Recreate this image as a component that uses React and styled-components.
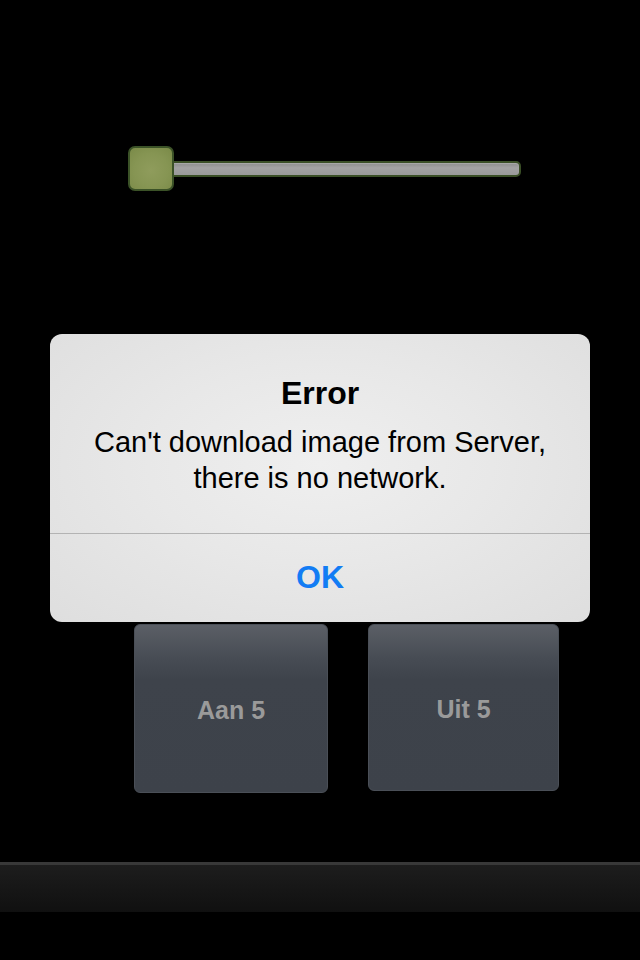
import React from 'react';
import styled, { createGlobalStyle } from 'styled-components';

const GlobalStyle = createGlobalStyle`
  html, body {
    margin: 0;
    padding: 0;
    background: #000;
  }
  body {
    font-family: "Liberation Sans", Arial, sans-serif;
  }
`;

export default function App() {
  const buttons = [
    { label: 'Aan 5', width: 194, height: 169 },
    { label: 'Uit 5', width: 191, height: 167 },
  ];

  return (
    <Screen>
      <GlobalStyle />
      <SliderRow>
        <Slider>
          <Track />
          <Thumb />
        </Slider>
      </SliderRow>

      <ButtonRow>
        {buttons.map((b) => (
          <PadButton key={b.label} $w={b.width} $h={b.height}>
            {b.label}
          </PadButton>
        ))}
      </ButtonRow>

      <TabBar />

      <Alert>
        <AlertBody>
          <Title>Error</Title>
          <Message>
            Can't download image from Server,
            <br />
            there is no network.
          </Message>
        </AlertBody>
        <AlertAction>OK</AlertAction>
      </Alert>
    </Screen>
  );
}

const Screen = styled.div`
  position: relative;
  width: 640px;
  height: 960px;
  background: #000;
  display: flex;
  flex-direction: column;
  overflow: hidden;
`;

const SliderRow = styled.div`
  display: flex;
  padding: 146px 0 0 128px;
`;

const Slider = styled.div`
  position: relative;
  width: 393px;
  height: 45px;
  display: flex;
  align-items: center;
`;

const Track = styled.div`
  margin-left: 20px;
  flex: 1;
  height: 12px;
  border: 2px solid #3a4f26;
  border-radius: 5px;
  background: linear-gradient(#8c8c8c, #a2a2a2 40%, #9a9a9a);
  box-shadow: inset 0 1px 1px rgba(255, 255, 255, 0.25);
`;

const Thumb = styled.div`
  position: absolute;
  left: 0;
  top: 0;
  width: 42px;
  height: 41px;
  border: 2px solid #3b5227;
  border-radius: 7px;
  background: radial-gradient(circle at 50% 55%, #8f9c5c 0%, #869553 55%, #7a8a48 100%);
`;

const ButtonRow = styled.div`
  display: flex;
  align-items: flex-start;
  gap: 40px;
  padding: 433px 0 0 134px;
`;

const PadButton = styled.div`
  box-sizing: border-box;
  width: ${(p) => p.$w}px;
  height: ${(p) => p.$h}px;
  padding-top: 3px;
  border: 1px solid #4a4f57;
  border-radius: 6px;
  background: linear-gradient(#5b5f66 0%, #474c54 20%, #3e434b 33%, #3d424a 100%);
  display: flex;
  align-items: center;
  justify-content: center;
  color: #9a9a9a;
  font-weight: bold;
  font-size: 25px;
`;

const TabBar = styled.div`
  margin-top: 69px;
  height: 50px;
  border-top: 3px solid #383838;
  box-sizing: border-box;
  background: linear-gradient(#1d1d1d, #101010);
`;

const Alert = styled.div`
  position: absolute;
  left: 50px;
  top: 334px;
  width: 540px;
  height: 288px;
  border-radius: 12px;
  background: radial-gradient(ellipse at 50% 45%, #efefef 0%, #e8e8e8 45%, #dedede 100%);
  display: flex;
  flex-direction: column;
  overflow: hidden;
`;

const AlertBody = styled.div`
  height: 200px;
  box-sizing: border-box;
  padding-top: 39px;
  border-bottom: 1px solid #b3b3b3;
  text-align: center;
  color: #000;
`;

const Title = styled.div`
  font-size: 32px;
  font-weight: bold;
  line-height: 40px;
`;

const Message = styled.div`
  margin-top: 11px;
  font-size: 29px;
  line-height: 36px;
`;

const AlertAction = styled.div`
  flex: 1;
  display: flex;
  align-items: center;
  justify-content: center;
  color: #127cf4;
  font-size: 32px;
  font-weight: bold;
  padding-bottom: 2px;
`;
